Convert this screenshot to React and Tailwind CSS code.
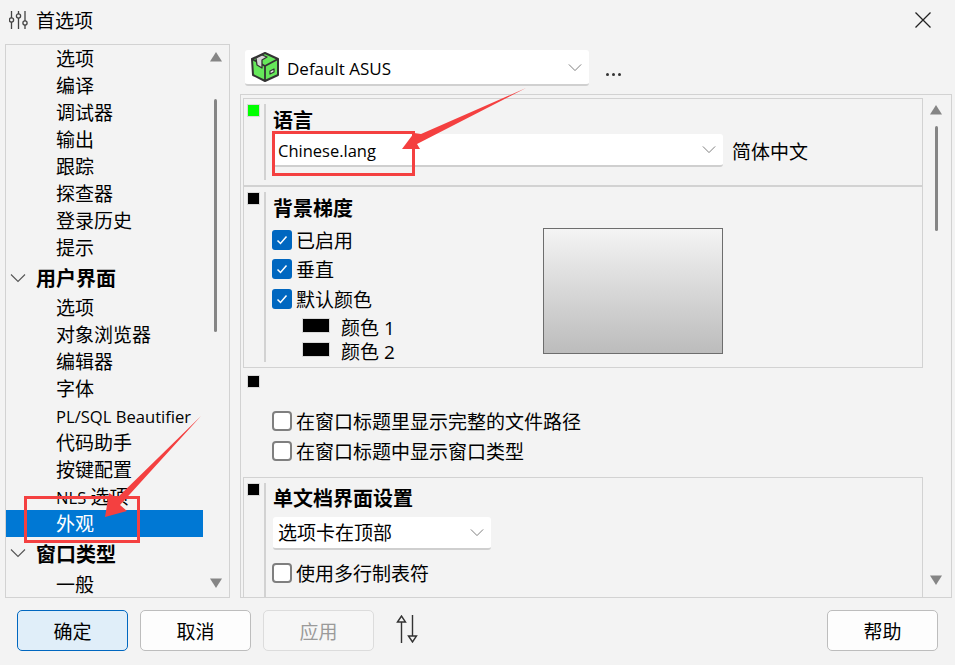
const CJK = "font-['Open_Sans','Noto_Sans_CJK_SC',sans-serif]";

const treeRows = [
  { label: "选项", h: "h-[27px]" },
  { label: "编译", h: "h-[27px]" },
  { label: "调试器", h: "h-[27px]" },
  { label: "输出", h: "h-[27px]" },
  { label: "跟踪", h: "h-[27px]" },
  { label: "探查器", h: "h-[27px]" },
  { label: "登录历史", h: "h-[27px]" },
  { label: "提示", h: "h-[27px]" },
  { label: "用户界面", group: true, h: "h-[33px]" },
  { label: "选项", h: "h-[27px]" },
  { label: "对象浏览器", h: "h-[27px]" },
  { label: "编辑器", h: "h-[27px]" },
  { label: "字体", h: "h-[27px]" },
  { label: "PL/SQL Beautifier", latin: true, h: "h-[27px]" },
  { label: "代码助手", h: "h-[27px]" },
  { label: "按键配置", h: "h-[27px]" },
  { label: "选项", prefix: "NLS ", h: "h-[27px]" },
  { label: "外观", active: true, h: "h-[27px]" },
  { label: "窗口类型", group: true, h: "h-[32px]" },
  { label: "一般", h: "h-[31px]" },
];

function Chevron({ className }) {
  return (
    <svg viewBox="0 0 16 10" className={className} fill="none" stroke="currentColor" strokeWidth="1.1">
      <path d="M1 1.5 8 8.5 15 1.5" />
    </svg>
  );
}

function Tri({ up }) {
  return (
    <svg viewBox="0 0 12 10" className="w-[12px] h-[10px]" fill="#858585">
      <path d={up ? "M6 0 12 9.5H0Z" : "M0 .5H12L6 10Z"} />
    </svg>
  );
}

function Check({ checked, label }) {
  return (
    <div className="flex items-center gap-[4px] h-[20px] whitespace-nowrap">
      {checked ? (
        <span className="w-[20px] h-[20px] shrink-0 rounded-[3px] bg-[#0067c0] flex items-center justify-center">
          <svg viewBox="0 0 14 14" className="w-[14px] h-[14px]" fill="none" stroke="#fff" strokeWidth="1.5">
            <path d="M2.500 7.500 5.500 10.500 11.500 3.500" />
          </svg>
        </span>
      ) : (
        <span className="w-[20px] h-[20px] shrink-0 rounded-[4px] bg-white border-2 border-[#7f7f7f]" />
      )}
      <span className="pt-[2px]">{label}</span>
    </div>
  );
}

function Marker({ green }) {
  return (
    <span className={`w-[11px] h-[11px] shrink-0 border border-[#d8d8d8] box-content block ${green ? "bg-[#00ff00]" : "bg-black"}`} />
  );
}

function Select({ label, className }) {
  return (
    <div className={`h-[33px] bg-white rounded-[3px] border-b-2 border-[#cfcfcf] flex items-center justify-between pl-[5px] pr-[7px] ${className}`}>
      <span className="whitespace-nowrap pt-[2px]">{label}</span>
      <Chevron className="w-[14px] h-[9px] text-[#7a7a7a]" />
    </div>
  );
}

function Swatch({ label }) {
  return (
    <div className="flex items-center h-[24px]">
      <span className="w-[26px] h-[13px] bg-black border border-[#d8d8d8] box-content" />
      <span className="ml-[11px] whitespace-nowrap pt-[6px]">{label}</span>
    </div>
  );
}

function Button({ children, primary, disabled }) {
  let tone = "bg-[#fdfdfd] border-[#bdbdbd] text-black";
  if (primary) tone = "bg-[#e0eef9] border-[#0067c0] text-black";
  if (disabled) tone = "bg-[#f6f6f6] border-[#dcdcdc] text-[#9a9a9a]";
  return (
    <div className={`w-[111px] h-[41px] rounded-[5px] border flex items-center justify-center pt-[3px] ${tone}`}>
      {children}
    </div>
  );
}

export default function App() {
  return (
    <div className={`${CJK} relative w-[955px] h-[665px] overflow-hidden bg-[#f3f3f3] text-[19px] leading-[27px] text-black flex flex-col`}>
      {/* title bar */}
      <div className="h-[44px] shrink-0 flex items-center pl-[9px] pr-[24px] pb-[4px]">
        <svg viewBox="0 0 20 18" className="w-[20px] h-[18px] text-[#444]" fill="#f3f3f3" stroke="currentColor" strokeWidth="1.3">
          <path d="M2.500 0V18M9.500 0V18M16 0V18" />
          <circle cx="2.500" cy="9" r="2.100" />
          <circle cx="9.500" cy="5" r="2.100" />
          <circle cx="16" cy="12" r="2.100" />
        </svg>
        <span className="ml-[7px] pt-[2px]">首选项</span>
        <svg viewBox="0 0 16 16" className="ml-auto w-[16px] h-[16px] text-[#222]" fill="none" stroke="currentColor" strokeWidth="1.3">
          <path d="M.5.5 15.500 15.500M15.500.5.5 15.500" />
        </svg>
      </div>

      {/* body */}
      <div className="h-[554px] shrink-0 flex pl-[5px] pr-[3px]">
        {/* tree */}
        <div className="relative w-[225px] border border-[#d2d2d2] overflow-hidden">
          <div className="w-[197px]">
            {treeRows.map((row, i) => (
              <div
                key={i}
                className={`${row.h} flex items-center whitespace-pre ${row.active ? "bg-[#0078d4] text-white" : ""} ${row.group ? "font-bold pl-[4px] text-[20px]" : "pl-[50px]"}`}
              >
                {row.group && <Chevron className="w-[16px] h-[10px] text-[#555] mr-[10px]" />}
                {row.prefix && <span className="text-[16.6px] pt-[2px]">{row.prefix}</span>}
                <span className={`pt-[2px] ${row.latin ? "text-[16.6px]" : ""}`}>{row.label}</span>
              </div>
            ))}
          </div>
          <div className="absolute right-[7px] top-[7px]"><Tri up /></div>
          <div className="absolute right-[12px] top-[54px] w-[3px] h-[233px] rounded-full bg-[#858585]" />
          <div className="absolute right-[7px] bottom-[9px]"><Tri /></div>
        </div>

        {/* right column */}
        <div className="ml-[10px] w-[712px] flex flex-col">
          <div className="h-[50px] shrink-0 flex items-start pt-[6px] pl-[5px]">
            <div className="w-[344px] h-[36px] bg-white rounded-[3px] border-b-2 border-[#d0d0d0] flex items-center pl-[5px] pr-[7px]">
              <svg viewBox="0 0 30 30" className="w-[30px] h-[30px]" strokeLinejoin="round">
                <path d="M15 1 28 7V23L15 29 3 23 2 7Z" fill="#66e85a" stroke="#333" strokeWidth="2" />
                <path d="M2 7 15 14 28 7M15 14V29" fill="none" stroke="#333" strokeWidth="1.800" />
                <path d="M6 6 12 3 17 5 12 8V16L7 13Z" fill="#d8d8d8" stroke="#333" strokeWidth="1.300" />
                <path d="M20 19 24 17V20L20 22Z" fill="#e8e8e8" stroke="#333" strokeWidth="1.200" />
              </svg>
              <span className="ml-[7px] text-[17px] pt-[2px]">Default ASUS</span>
              <Chevron className="ml-auto w-[14px] h-[9px] text-[#7a7a7a]" />
            </div>
            <span className="ml-[17px] mt-[23px] flex gap-[3px]">
              <i className="w-[3px] h-[3px] rounded-full bg-[#333]" />
              <i className="w-[3px] h-[3px] rounded-full bg-[#333]" />
              <i className="w-[3px] h-[3px] rounded-full bg-[#333]" />
            </span>
          </div>

          <div className="relative flex-1 border border-[#d2d2d2] pt-[3px] pl-[2px] overflow-hidden">
            <div className="w-[680px]">
              {/* language */}
              <section className="h-[89px] border border-[#d2d2d2] border-b-[2px] flex pl-[3px] pt-[5px]">
                <Marker green />
                <div className="ml-[4px] w-[2px] h-[76px] bg-[#d2d2d2]" />
                <div className="ml-[7px]">
                  <div className="font-bold text-[20px] leading-[24px] mt-[5px]">语言</div>
                  <div className="flex items-center mt-[1px]">
                    <Select label="Chinese.lang" className="w-[450px] text-[16.5px]" />
                    <span className="ml-[9px] pt-[4px]">简体中文</span>
                  </div>
                </div>
              </section>

              {/* gradient */}
              <section className="h-[181px] border border-t-0 border-[#d2d2d2] flex pl-[3px] pt-[5px]">
                <Marker />
                <div className="ml-[4px] w-[2px] h-[170px] bg-[#d2d2d2]" />
                <div className="ml-[7px] w-[231px]">
                  <div className="font-bold text-[20px] leading-[24px] mt-[5px]">背景梯度</div>
                  <div className="-ml-[1px] mt-[9px] flex flex-col">
                    <Check checked label="已启用" />
                    <div className="mt-[9px]"><Check checked label="垂直" /></div>
                    <div className="mt-[10px]"><Check checked label="默认颜色" /></div>
                  </div>
                  <div className="ml-[29px] mt-[4px]">
                    <Swatch label="颜色 1" />
                    <Swatch label="颜色 2" />
                  </div>
                </div>
                <div className="ml-[39px] mt-[36px] w-[180px] h-[126px] border border-[#6d6d6d] bg-gradient-to-b from-[#f4f4f4] to-[#bcbcbc]" />
              </section>

              {/* window title */}
              <section className="h-[109px] pl-[4px] pt-[7px]">
                <Marker />
                <div className="ml-[25px] mt-[23px] flex flex-col gap-[10px]">
                  <Check label="在窗口标题里显示完整的文件路径" />
                  <Check label="在窗口标题中显示窗口类型" />
                </div>
              </section>

              {/* sdi */}
              <section className="h-[130px] border-l border-t border-r border-[#d2d2d2] flex pl-[3px] pt-[5px]">
                <Marker />
                <div className="ml-[4px] w-[2px] h-[120px] bg-[#d2d2d2]" />
                <div className="ml-[7px]">
                  <div className="font-bold text-[20px] leading-[24px] mt-[4px]">单文档界面设置</div>
                  <Select label="选项卡在顶部" className="w-[218px] mt-[6px]" />
                  <div className="-ml-[1px] mt-[13px]">
                    <Check label="使用多行制表符" />
                  </div>
                </div>
              </section>
            </div>

            {/* outer scrollbar */}
            <div className="absolute right-[9px] top-[10px]"><Tri up /></div>
            <div className="absolute right-[13px] top-[31px] w-[3px] h-[105px] rounded-full bg-[#858585]" />
            <div className="absolute right-[9px] bottom-[12px]"><Tri /></div>
          </div>
        </div>
      </div>

      {/* footer */}
      <div className="flex-1 flex items-start pt-[12px] pl-[17px] pr-[17px]">
        <div className="flex gap-[12px]">
          <Button primary>确定</Button>
          <Button>取消</Button>
          <Button disabled>应用</Button>
        </div>
        <svg viewBox="0 0 22 28" className="ml-[22px] mt-[5px] w-[22px] h-[28px] text-[#333]" fill="none" stroke="currentColor" strokeWidth="1.400">
          <path d="M5.500 5V28M16.500 0V22" />
          <path d="M1.500 7 5.500 1 9.500 7Z" fill="#f3f3f3" />
          <path d="M12.500 21 16.500 27 20.500 21Z" fill="#f3f3f3" />
        </svg>
        <div className="ml-auto">
          <Button>帮助</Button>
        </div>
      </div>

      {/* red annotations over the screenshot */}
      <div className="absolute left-[24px] top-[496px] w-[116px] h-[47px] border-[3px] border-[#f44040]" />
      <div className="absolute left-[272px] top-[131px] w-[143px] h-[45px] border-[3px] border-[#f44040]" />
      <svg viewBox="0 0 955 665" className="absolute inset-0 w-[955px] h-[665px] pointer-events-none" fill="#f44040">
        <path d="M526 88 421 134 414 133 402 149 420 149 417 144Z" />
        <path d="M201 416 117 498 109 493 105 517 127 511 120 505Z" />
      </svg>
    </div>
  );
}
